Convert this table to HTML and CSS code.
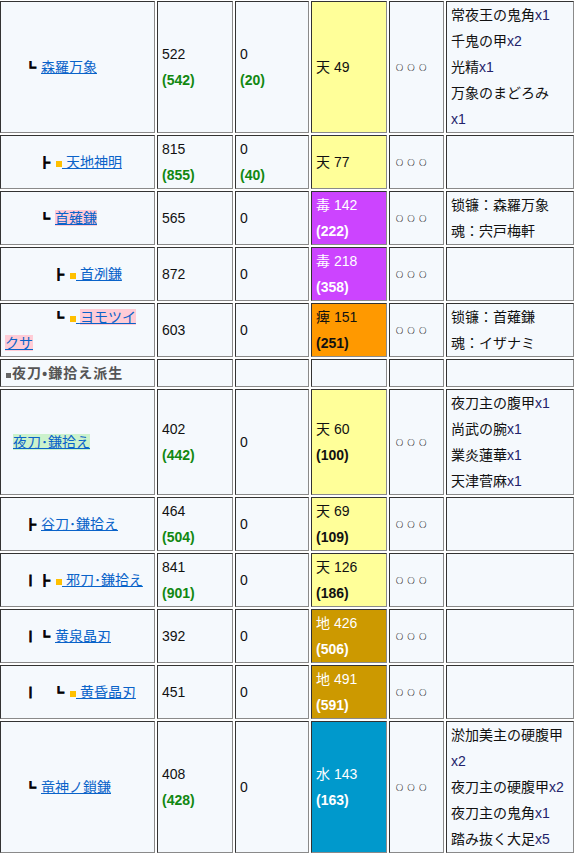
FILE: index.html
```html
<!DOCTYPE html>
<html lang="ja">
<head>
<meta charset="utf-8">
<title>夜刀・鎌拾え派生</title>
<link rel="stylesheet" href="styles.css">
</head>
<body>
<table class="wt">
<colgroup><col class="c1"><col class="c2"><col class="c3"><col class="c4"><col class="c5"><col class="c6"></colgroup>
<tbody>
<tr class="r5">
<td class="nm"><span class="ind"></span><span class="b"></span><span class="t">┗</span><a href="#">森羅万象</a></td>
<td>522<br><b class="up">(542)</b></td>
<td>0<br><b class="up">(20)</b></td>
<td class="el ten">天 49</td>
<td class="sl">○ ○ ○</td>
<td class="mat">常夜王の鬼角<span class="x">x1</span><br>千鬼の甲<span class="x">x2</span><br>光精<span class="x">x1</span><br>万象のまどろみ<br><span class="x">x1</span></td>
</tr>
<tr>
<td class="nm"><span class="ind"></span><span class="b"></span><span class="b"></span><span class="t">┣</span><span class="sq"></span><a href="#"> 天地神明</a></td>
<td>815<br><b class="up">(855)</b></td>
<td>0<br><b class="up">(40)</b></td>
<td class="el ten">天 77</td>
<td class="sl">○ ○ ○</td>
<td class="mat"></td>
</tr>
<tr>
<td class="nm"><span class="ind"></span><span class="b"></span><span class="b"></span><span class="t">┗</span><a href="#"><span class="pk">首薙鎌</span></a></td>
<td>565</td>
<td>0</td>
<td class="el doku">毒 142<br><b>(222)</b></td>
<td class="sl">○ ○ ○</td>
<td class="mat">锁镰：森羅万象<br>魂：宍戸梅軒</td>
</tr>
<tr>
<td class="nm"><span class="ind"></span><span class="b"></span><span class="b"></span><span class="b"></span><span class="t">┣</span><span class="sq"></span><a href="#"> 首冽鎌</a></td>
<td>872</td>
<td>0</td>
<td class="el doku">毒 218<br><b>(358)</b></td>
<td class="sl">○ ○ ○</td>
<td class="mat"></td>
</tr>
<tr>
<td class="nm"><span class="ind"></span><span class="b"></span><span class="b"></span><span class="b"></span><span class="t">┗</span><span class="sq"></span><a href="#"> <span class="pk">ヨモツイ<br>クサ</span></a></td>
<td>603</td>
<td>0</td>
<td class="el hi">痺 151<br><b>(251)</b></td>
<td class="sl">○ ○ ○</td>
<td class="mat">锁镰：首薙鎌<br>魂：イザナミ</td>
</tr>
<tr>
<td class="nm"><span class="hsq"></span><b class="hd">夜刀・鎌拾え派生</b></td>
<td></td>
<td></td>
<td></td>
<td></td>
<td></td>
</tr>
<tr>
<td class="nm"><span class="ind"></span><a href="#"><span class="gr">夜刀･鎌拾え</span></a></td>
<td>402<br><b class="up">(442)</b></td>
<td>0</td>
<td class="el ten">天 60<br><b>(100)</b></td>
<td class="sl">○ ○ ○</td>
<td class="mat">夜刀主の腹甲<span class="x">x1</span><br>尚武の腕<span class="x">x1</span><br>業炎蓮華<span class="x">x1</span><br>天津菅麻<span class="x">x1</span></td>
</tr>
<tr>
<td class="nm"><span class="ind"></span><span class="b"></span><span class="t">┣</span><a href="#">谷刀･鎌拾え</a></td>
<td>464<br><b class="up">(504)</b></td>
<td>0</td>
<td class="el ten">天 69<br><b>(109)</b></td>
<td class="sl">○ ○ ○</td>
<td class="mat"></td>
</tr>
<tr>
<td class="nm"><span class="ind"></span><span class="b"></span><span class="t">┃</span><span class="t">┣</span><span class="sq"></span><a href="#"> 邪刀･鎌拾え</a></td>
<td>841<br><b class="up">(901)</b></td>
<td>0</td>
<td class="el ten">天 126<br><b>(186)</b></td>
<td class="sl">○ ○ ○</td>
<td class="mat"></td>
</tr>
<tr>
<td class="nm"><span class="ind"></span><span class="b"></span><span class="t">┃</span><span class="t">┗</span><a href="#">黄泉晶刃</a></td>
<td>392</td>
<td>0</td>
<td class="el chi">地 426<br><b>(506)</b></td>
<td class="sl">○ ○ ○</td>
<td class="mat"></td>
</tr>
<tr>
<td class="nm"><span class="ind"></span><span class="b"></span><span class="t">┃</span><span class="b"></span><span class="t">┗</span><span class="sq"></span><a href="#"> 黄昏晶刃</a></td>
<td>451</td>
<td>0</td>
<td class="el chi">地 491<br><b>(591)</b></td>
<td class="sl">○ ○ ○</td>
<td class="mat"></td>
</tr>
<tr>
<td class="nm"><span class="ind"></span><span class="b"></span><span class="t">┗</span><a href="#">竜神ノ鎖鎌</a></td>
<td>408<br><b class="up">(428)</b></td>
<td>0</td>
<td class="el mizu">水 143<br><b>(163)</b></td>
<td class="sl">○ ○ ○</td>
<td class="mat">淤加美主の硬腹甲<br><span class="x">x2</span><br>夜刀主の硬腹甲<span class="x">x2</span><br>夜刀主の鬼角<span class="x">x1</span><br>踏み抜く大足<span class="x">x5</span></td>
</tr>
</tbody>
</table>
</body>
</html>
```

FILE: styles.css
```css
html, body {
  margin: 0;
  padding: 0;
  background: #fff;
}

body {
  font-family: "Liberation Sans", "Noto Sans CJK SC", sans-serif;
  font-size: 14px;
  line-height: 26px;
  color: #111;
  overflow: hidden;
}

.wt {
  border-collapse: separate;
  border-spacing: 2px;
  table-layout: fixed;
  width: 578px;
  margin: -1px 0 0 -2px;
}

.c1 { width: 155px; }
.c2 { width: 76px; }
.c3 { width: 74px; }
.c4 { width: 76px; }
.c5 { width: 55px; }
.c6 { width: 128px; }

.wt td {
  background: #f5f9fd;
  border: 1px solid;
  border-color: #333 #8a8a8a #8a8a8a #333;
  padding: 0 4px;
  vertical-align: middle;
  line-height: 26px;
  overflow: hidden;
}

a {
  color: #0a63c9;
  text-decoration: underline;
}

.ind {
  display: inline-block;
  width: 8px;
}

.b {
  display: inline-block;
  width: 14px;
}

.t {
  display: inline-block;
  width: 11px;
  margin-left: -2px;
  margin-right: 5px;
  font-family: "Noto Sans CJK SC", sans-serif;
  font-weight: bold;
  font-size: 11px;
  line-height: 11px;
  color: #000;
  -webkit-text-stroke: 0.9px #000;
}

.sq {
  display: inline-block;
  width: 6px;
  height: 6px;
  margin-left: 1px;
  background: #ffc000;
}

.hsq {
  display: inline-block;
  width: 5px;
  height: 5px;
  margin: 0 1px 0 1px;
  background: #666;
}

.hd {
  color: #555;
  font-weight: bold;
  letter-spacing: 1px;
}

.pk {
  background: #ffccd6;
}

.gr {
  background: #ccf2cc;
}

.up {
  color: #118811;
}

.x {
  color: #23236b;
}

.sl {
  font-family: "Noto Sans CJK SC", sans-serif;
  font-size: 7px;
  word-spacing: 3px;
  text-indent: 2px;
  color: #222;
  -webkit-text-stroke: 0.2px #222;
}

.el.ten { background: #ffff99; }
.el.doku { background: #cc44ff; color: #fff; }
.el.hi { background: #ff9900; color: #111; }
.el.chi { background: #cc9900; color: #fff; }
.el.mizu { background: #0099cc; color: #fff; }
```
